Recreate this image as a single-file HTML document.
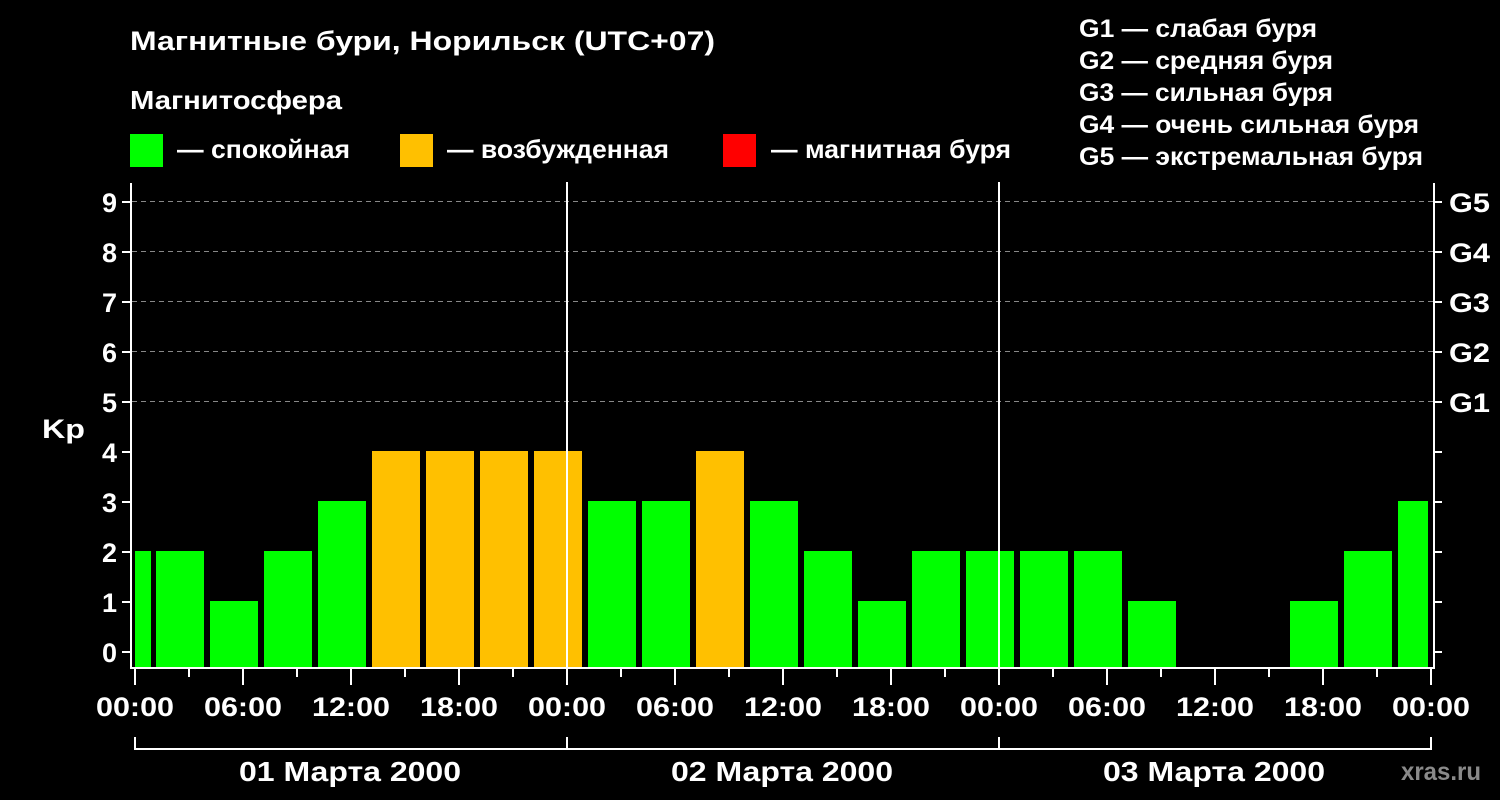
<!DOCTYPE html>
<html><head><meta charset="utf-8"><style>
html,body{margin:0;padding:0;background:#000;width:1500px;height:800px;overflow:hidden}
svg text{font-family:"Liberation Sans",sans-serif;font-weight:bold;fill:#fff}
</style></head><body>
<svg width="1500" height="800" viewBox="0 0 1500 800" xmlns="http://www.w3.org/2000/svg">
<rect width="1500" height="800" fill="#000"/>
<text x="130" y="50" font-size="27" textLength="585" lengthAdjust="spacingAndGlyphs">Магнитные бури, Норильск (UTC+07)</text>
<text x="130" y="109" font-size="26" textLength="212" lengthAdjust="spacingAndGlyphs">Магнитосфера</text>
<rect x="130" y="134" width="33" height="33" fill="#00ff00"/>
<text x="177" y="158" font-size="26" textLength="173" lengthAdjust="spacingAndGlyphs">— спокойная</text>
<rect x="400" y="134" width="33" height="33" fill="#ffc000"/>
<text x="447" y="158" font-size="26" textLength="222" lengthAdjust="spacingAndGlyphs">— возбужденная</text>
<rect x="723" y="134" width="33" height="33" fill="#ff0000"/>
<text x="771" y="158" font-size="26" textLength="240" lengthAdjust="spacingAndGlyphs">— магнитная буря</text>
<g font-size="25">
<text x="1079" y="37" textLength="238" lengthAdjust="spacingAndGlyphs">G1 — слабая буря</text>
<text x="1079" y="69" textLength="254" lengthAdjust="spacingAndGlyphs">G2 — средняя буря</text>
<text x="1079" y="101" textLength="254" lengthAdjust="spacingAndGlyphs">G3 — сильная буря</text>
<text x="1079" y="133" textLength="340" lengthAdjust="spacingAndGlyphs">G4 — очень сильная буря</text>
<text x="1079" y="165" textLength="344" lengthAdjust="spacingAndGlyphs">G5 — экстремальная буря</text>
</g>
<g stroke="#888" stroke-width="1" stroke-dasharray="5,4">
<line x1="132" x2="1433" y1="201.5" y2="201.5"/>
<line x1="132" x2="1433" y1="251.5" y2="251.5"/>
<line x1="132" x2="1433" y1="301.5" y2="301.5"/>
<line x1="132" x2="1433" y1="351.5" y2="351.5"/>
<line x1="132" x2="1433" y1="401.5" y2="401.5"/>
</g>
<g>
<rect x="135" y="551" width="16" height="117" fill="#00ff00"/>
<rect x="156" y="551" width="48" height="117" fill="#00ff00"/>
<rect x="210" y="601" width="48" height="67" fill="#00ff00"/>
<rect x="264" y="551" width="48" height="117" fill="#00ff00"/>
<rect x="318" y="501" width="48" height="167" fill="#00ff00"/>
<rect x="372" y="451" width="48" height="217" fill="#ffc000"/>
<rect x="426" y="451" width="48" height="217" fill="#ffc000"/>
<rect x="480" y="451" width="48" height="217" fill="#ffc000"/>
<rect x="534" y="451" width="48" height="217" fill="#ffc000"/>
<rect x="588" y="501" width="48" height="167" fill="#00ff00"/>
<rect x="642" y="501" width="48" height="167" fill="#00ff00"/>
<rect x="696" y="451" width="48" height="217" fill="#ffc000"/>
<rect x="750" y="501" width="48" height="167" fill="#00ff00"/>
<rect x="804" y="551" width="48" height="117" fill="#00ff00"/>
<rect x="858" y="601" width="48" height="67" fill="#00ff00"/>
<rect x="912" y="551" width="48" height="117" fill="#00ff00"/>
<rect x="966" y="551" width="48" height="117" fill="#00ff00"/>
<rect x="1020" y="551" width="48" height="117" fill="#00ff00"/>
<rect x="1074" y="551" width="48" height="117" fill="#00ff00"/>
<rect x="1128" y="601" width="48" height="67" fill="#00ff00"/>
<rect x="1290" y="601" width="48" height="67" fill="#00ff00"/>
<rect x="1344" y="551" width="48" height="117" fill="#00ff00"/>
<rect x="1398" y="501" width="30" height="167" fill="#00ff00"/>
</g>
<g stroke="#fff" stroke-width="2" fill="none">
<line x1="567" y1="182" x2="567" y2="668"/>
<line x1="999" y1="182" x2="999" y2="668"/>
<polyline points="131,183 131,668 1434,668 1434,183"/>
<path d="M122 652H131M122 602H131M122 552H131M122 502H131M122 452H131M122 402H131M122 352H131M122 302H131M122 252H131M122 202H131"/>
<path d="M1434 652H1442M1434 602H1442M1434 552H1442M1434 502H1442M1434 452H1442M1434 402H1442M1434 352H1442M1434 302H1442M1434 252H1442M1434 202H1442"/>
<path d="M135 668V685M243 668V685M351 668V685M459 668V685M567 668V685M675 668V685M783 668V685M891 668V685M999 668V685M1107 668V685M1215 668V685M1323 668V685M1431 668V685"/>
<path d="M189 668V677M297 668V677M405 668V677M513 668V677M621 668V677M729 668V677M837 668V677M945 668V677M1053 668V677M1161 668V677M1269 668V677M1377 668V677"/>
<polyline points="135,737 135,749 1431,749 1431,737"/>
<line x1="567" y1="737" x2="567" y2="749"/>
<line x1="999" y1="737" x2="999" y2="749"/>
</g>
<g font-size="27" text-anchor="end">
<text x="117" y="662">0</text><text x="117" y="612">1</text><text x="117" y="562">2</text>
<text x="117" y="512">3</text><text x="117" y="462">4</text><text x="117" y="412">5</text>
<text x="117" y="362">6</text><text x="117" y="312">7</text><text x="117" y="262">8</text>
<text x="117" y="212">9</text>
</g>
<text x="42" y="438" font-size="27" textLength="43" lengthAdjust="spacingAndGlyphs">Kp</text>
<g font-size="27">
<text x="1449" y="212" textLength="41" lengthAdjust="spacingAndGlyphs">G5</text><text x="1449" y="262" textLength="41" lengthAdjust="spacingAndGlyphs">G4</text><text x="1449" y="312" textLength="41" lengthAdjust="spacingAndGlyphs">G3</text>
<text x="1449" y="362" textLength="41" lengthAdjust="spacingAndGlyphs">G2</text><text x="1449" y="412" textLength="41" lengthAdjust="spacingAndGlyphs">G1</text>
</g>
<g font-size="27" text-anchor="middle">
<text x="135" y="716" textLength="78" lengthAdjust="spacingAndGlyphs">00:00</text><text x="243" y="716" textLength="78" lengthAdjust="spacingAndGlyphs">06:00</text><text x="351" y="716" textLength="78" lengthAdjust="spacingAndGlyphs">12:00</text>
<text x="459" y="716" textLength="78" lengthAdjust="spacingAndGlyphs">18:00</text><text x="567" y="716" textLength="78" lengthAdjust="spacingAndGlyphs">00:00</text><text x="675" y="716" textLength="78" lengthAdjust="spacingAndGlyphs">06:00</text>
<text x="783" y="716" textLength="78" lengthAdjust="spacingAndGlyphs">12:00</text><text x="891" y="716" textLength="78" lengthAdjust="spacingAndGlyphs">18:00</text><text x="999" y="716" textLength="78" lengthAdjust="spacingAndGlyphs">00:00</text>
<text x="1107" y="716" textLength="78" lengthAdjust="spacingAndGlyphs">06:00</text><text x="1215" y="716" textLength="78" lengthAdjust="spacingAndGlyphs">12:00</text><text x="1323" y="716" textLength="78" lengthAdjust="spacingAndGlyphs">18:00</text>
<text x="1431" y="716" textLength="78" lengthAdjust="spacingAndGlyphs">00:00</text>
</g>
<g font-size="28" text-anchor="middle">
<text x="350" y="781" textLength="222" lengthAdjust="spacingAndGlyphs">01 Марта 2000</text>
<text x="782" y="781" textLength="222" lengthAdjust="spacingAndGlyphs">02 Марта 2000</text>
<text x="1214" y="781" textLength="222" lengthAdjust="spacingAndGlyphs">03 Марта 2000</text>
</g>
<text x="1401" y="780" font-size="25" style="fill:#8a8a8a" textLength="80" lengthAdjust="spacingAndGlyphs">xras.ru</text>
</svg>
</body></html>
